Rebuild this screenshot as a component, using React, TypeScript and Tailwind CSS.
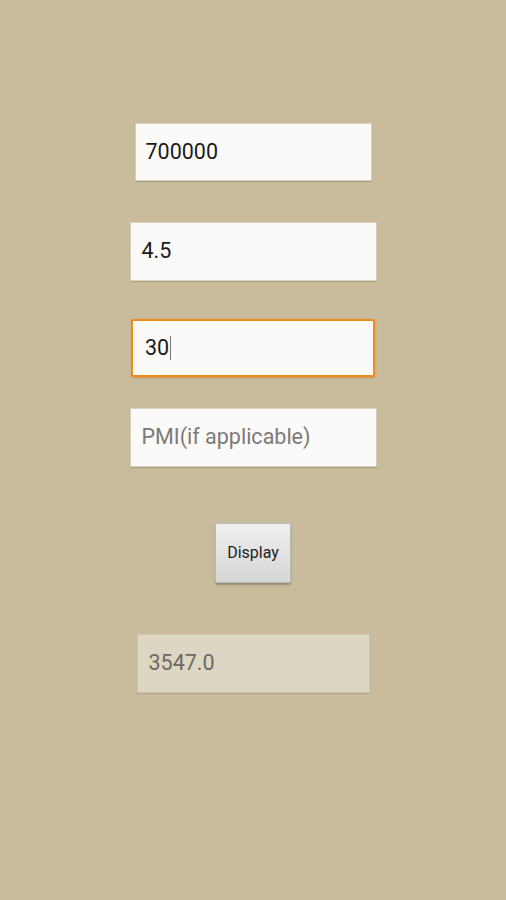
import React from "react";

export default function App() {
  const font = { fontFamily: "Roboto, 'Noto Sans', sans-serif" };
  return (
    <div
      className="w-[506px] h-[900px] bg-[#c8bc9c] flex flex-col items-center pt-[123px]"
      style={font}
    >
      <div className="w-[237px] h-[58px] bg-[#fbfaf8] border border-[#d9d2bf] shadow-[0_1px_1px_rgba(0,0,0,0.15)] flex items-center pl-[10px] text-[21.5px] text-[#1a1a1a]">
        700000
      </div>
      <div className="mt-[41px] w-[247px] h-[59px] bg-[#fbfaf8] border border-[#d9d2bf] shadow-[0_1px_1px_rgba(0,0,0,0.15)] flex items-center pl-[11px] text-[21.5px] text-[#1a1a1a]">
        4.5
      </div>
      <div className="mt-[38px] w-[244px] h-[58px] bg-[#fbfaf8] border-2 border-[#f08c1a] rounded-[2px] shadow-[0_1px_2px_rgba(200,100,0,0.4)] flex items-center pl-[12px] text-[21.5px] text-[#1a1a1a]">
        <span>30</span>
        <span className="w-[1px] h-[24px] bg-[#777] ml-[1px]"></span>
      </div>
      <div className="mt-[31px] w-[247px] h-[59px] bg-[#fbfaf8] border border-[#d9d2bf] shadow-[0_1px_1px_rgba(0,0,0,0.15)] flex items-center pl-[11px] text-[21.5px] text-[#7a7a7a]">
        PMI(if applicable)
      </div>
      <div className="mt-[56px] w-[76px] h-[60px] bg-gradient-to-b from-[#efefef] to-[#d6d6d6] border border-[#bdbdbd] rounded-[2px] shadow-[0_2px_2px_rgba(0,0,0,0.25)] flex items-center justify-center text-[16px] text-[#222]">
        Display
      </div>
      <div className="mt-[51px] w-[233px] h-[59px] bg-[#ddd6c3] border border-[#cfc6ae] shadow-[0_1px_1px_rgba(0,0,0,0.1)] flex items-center pl-[11px] text-[21.5px] text-[#6b6a62]">
        3547.0
      </div>
    </div>
  );
}
